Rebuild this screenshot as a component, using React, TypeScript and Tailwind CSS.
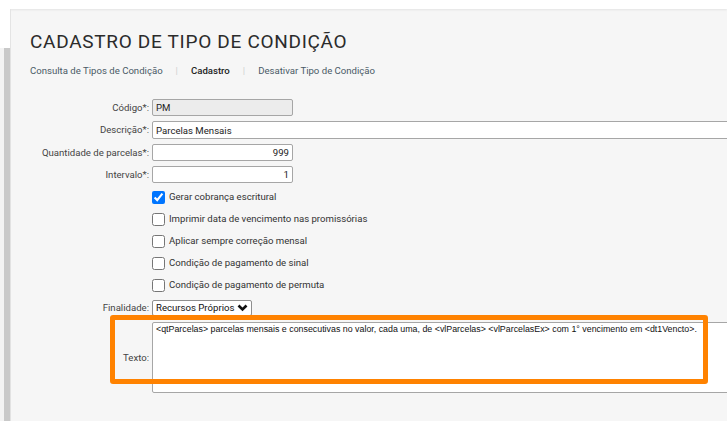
import React from "react";

const checks = [
  { label: "Gerar cobrança escritural", checked: true },
  { label: "Imprimir data de vencimento nas promissórias", checked: false },
  { label: "Aplicar sempre correção mensal", checked: false },
  { label: "Condição de pagamento de sinal", checked: false },
  { label: "Condição de pagamento de permuta", checked: false },
];

const texto =
  "<qtParcelas> parcelas mensais e consecutivas no valor, cada uma, de <vlParcelas> <vlParcelasEx> com 1° vencimento em <dt1Vencto>.";

function Row({ label, children }: { label: string; children: React.ReactNode }) {
  return (
    <div className="flex items-center">
      <label className="w-[139px] pr-[1px] text-right text-[9.6px] leading-[12px] text-[#444]">{label}</label>
      <div className="ml-[2px] flex">{children}</div>
    </div>
  );
}

export default function App() {
  return (
    <div className="relative w-[727px] h-[421px] overflow-hidden bg-[#f6f6f6] font-['Roboto',sans-serif]">
      {/* top bar */}
      <div className="h-[9px] bg-white shadow-[0_1px_2px_rgba(0,0,0,0.08)]"></div>

      <div className="flex h-[412px]">
        {/* left strip */}
        <div className="flex w-[11px] flex-col">
          <div className="h-[39px] bg-white border-r border-[#e4e4e4]"></div>
          <div className="flex flex-1">
            <div className="w-[4px] bg-[#f3f3f3]"></div>
            <div className="w-[6px] bg-[#c9c9c9]"></div>
            <div className="w-[1px] bg-[#e2e2e2]"></div>
          </div>
        </div>

        {/* main */}
        <div className="flex-1">
          <div className="pl-[19px]">
            <h1 className="mt-[23px] text-[19px] leading-[19px] tracking-[0.7px] text-[#2b2b2b]">
              CADASTRO DE TIPO DE CONDIÇÃO
            </h1>
            <div className="mt-[14px] flex items-center text-[9.6px] leading-[12px] text-[#4a5a66]">
              <span>Consulta de Tipos de Condição</span>
              <span className="px-[13px] text-[#d0d0d0]">|</span>
              <span className="font-medium text-[#222]">Cadastro</span>
              <span className="px-[13px] text-[#d0d0d0]">|</span>
              <span>Desativar Tipo de Condição</span>
            </div>
          </div>

          <div className="mt-[22px] flex flex-col gap-[5px]">
            <Row label="Código*:">
              <input
                readOnly
                value="PM"
                className="h-[17px] w-[141px] rounded-[2px] border border-[#a6a6a6] bg-[#ececec] px-[3px] text-[9.6px] text-[#222] outline-none"
              />
            </Row>
            <Row label="Descrição*:">
              <input
                readOnly
                value="Parcelas Mensais"
                className="h-[18px] w-[620px] rounded-[2px] border border-[#a6a6a6] bg-white px-[3px] text-[9.6px] text-[#222] outline-none"
              />
            </Row>
            <Row label="Quantidade de parcelas*:">
              <input
                readOnly
                value="999"
                className="h-[17px] w-[141px] rounded-[2px] border border-[#a6a6a6] bg-white px-[3px] text-right text-[9.6px] text-[#222] outline-none"
              />
            </Row>
            <Row label="Intervalo*:">
              <input
                readOnly
                value="1"
                className="h-[17px] w-[141px] rounded-[2px] border border-[#a6a6a6] bg-white px-[3px] text-right text-[9.6px] text-[#222] outline-none"
              />
            </Row>
          </div>

          <div className="mt-[3px] flex flex-col pl-[141px]">
            {checks.map((c) => (
              <label key={c.label} className="flex h-[22px] items-center gap-[4px] text-[9.6px] leading-[12px] text-[#333]">
                <input type="checkbox" defaultChecked={c.checked} className="h-[13px] w-[13px]" />
                <span>{c.label}</span>
              </label>
            ))}
          </div>

          <div className="mt-[4px]">
            <Row label="Finalidade:">
              <div className="flex h-[16px] w-[100px] items-center justify-between whitespace-nowrap rounded-[2px] border border-[#8f8f8f] bg-white pl-[3px] pr-[3px] text-[9.6px] text-[#111]">
                <span>Recursos Próprios</span>
                <svg width="11" height="8" viewBox="0 0 11 8">
                  <polyline points="1.5,1.5 5.5,5.5 9.5,1.5" fill="none" stroke="#111" strokeWidth="2.6" />
                </svg>
              </div>
            </Row>
          </div>

          <div className="mt-[6px]">
            <Row label="Texto:">
              <div className="h-[71px] w-[620px] rounded-[2px] border border-[#a6a6a6] bg-white px-[3px] pt-[1px] font-['Liberation_Sans',Arial,sans-serif] text-[8.85px] leading-[11px] text-[#111]">
                {texto}
              </div>
            </Row>
          </div>
        </div>
      </div>

      {/* highlight annotation */}
      <div className="absolute left-[110px] top-[315px] h-[69px] w-[598px] rounded-[3px] border-[5px] border-[#ff8200]"></div>
    </div>
  );
}
